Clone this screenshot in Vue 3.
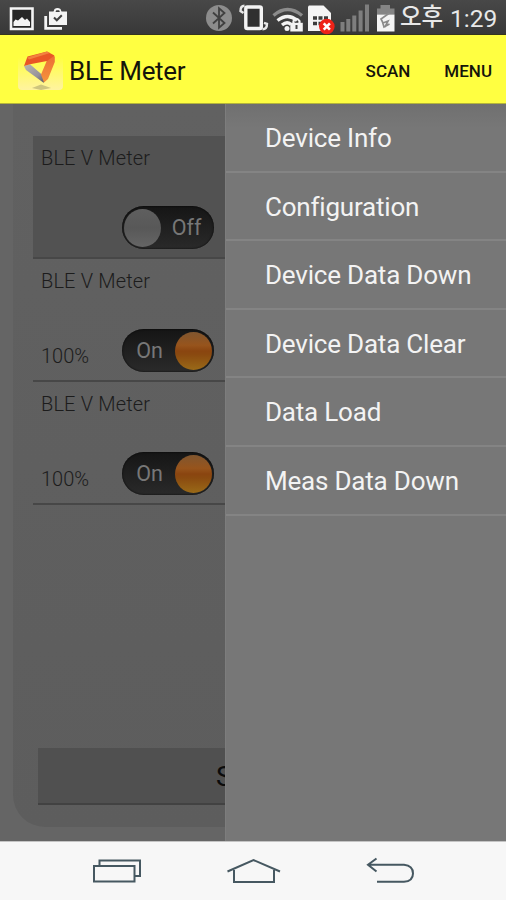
<script setup>
import { ref } from 'vue';

const devices = ref([
  { name: 'BLE V Meter', level: '', on: false },
  { name: 'BLE V Meter', level: '100%', on: true },
  { name: 'BLE V Meter', level: '100%', on: true }
]);

const menu = [
  'Device Info',
  'Configuration',
  'Device Data Down',
  'Device Data Clear',
  'Data Load',
  'Meas Data Down'
];

const toggle = (device) => device.on = !device.on;
</script>

<template>
  <div class="screen">
    <div class="status">
      <svg class="notices" width="80" height="35" viewBox="0 0 80 35">
        <path d="M11 8.5h21.500v20.500H11z" fill="#262626" stroke="#f4f4f4" stroke-width="2.600" />
        <path d="M13.500 26v-4l2-2.500 2.500 1 4-3.500 3 3 2-1.500 3 3.500v4z" fill="#f4f4f4" />
        <path d="M45.700 16v12.300H62" fill="none" stroke="#f4f4f4" stroke-width="2.800" />
        <path d="M49 11.500h4.500l1-2.500q3-2 6 0l1 2.500H67v13.500H49z" fill="#f4f4f4" />
        <path d="M55.500 12l.8-1.700h2.800l.8 1.700z" fill="#414141" />
        <path d="M54 17.500l2.800 2.800 5-5" fill="none" stroke="#414141" stroke-width="2" />
      </svg>
      <svg class="signals" width="196" height="35" viewBox="202 0 196 35">
        <!-- bluetooth -->
        <circle cx="219" cy="18" r="13" fill="#8c8c8c" />
        <path d="M213 12.500l11.500 10.500-5.500 4.800V8.200l5.500 4.800L213 23.500" fill="none" stroke="#404040" stroke-width="1.800" />
        <!-- vibration / rotation -->
        <rect x="245.800" y="7" width="15.500" height="21.500" rx="1.500" fill="#303030" stroke="#f4f4f4" stroke-width="3.400" />
        <path d="M244.500 5.800q-4 0-4 5.200l3 2M262.500 29.300q4.500 0 4.500-5.500l-3-1" fill="none" stroke="#e8e8e8" stroke-width="2.400" />
        <!-- wifi -->
        <g fill="none" stroke-width="3.400">
          <path d="M273.500 15.500q14-12 28.500 0" stroke="#8c8c8c" />
          <path d="M277.500 20.500q10.500-8 19.500 0" stroke="#f4f4f4" />
          <path d="M282 25q5-4 9 -.5" stroke="#f4f4f4" />
        </g>
        <circle cx="287" cy="28.500" r="2.500" fill="#f4f4f4" />
        <path d="M290.300 22.800h12.500v8.700h-12.500z" fill="#f4f4f4" />
        <path d="M293.500 24v-3q3-4.500 6 0v3" fill="none" stroke="#f4f4f4" stroke-width="2.200" />
        <path d="M296.500 25v4" stroke="#444" stroke-width="2" />
        <!-- sim card -->
        <path d="M309 5.500h14.500l7.500 7.500v18h-23v-24.500z" fill="#f4f4f4" />
        <path d="M313 18h15M313 23.500h15" stroke="#3c3c3c" stroke-width="3.600" stroke-dasharray="4 1.500" />
        <circle cx="326.800" cy="26.500" r="7.800" fill="#ee2218" />
        <path d="M323.700 23.400l6.200 6.200m0-6.200l-6.200 6.200" stroke="#fff" stroke-width="2.600" />
        <!-- signal bars -->
        <path d="M342.500 31.500v-9.500M348.300 31.500v-12.500M354.300 31.500V15.500M360.600 31.500V10.500M367 31.500V4.500" stroke="#7e7e7e" stroke-width="4" />
        <!-- battery -->
        <path d="M380.500 5h9.500v3.500h4.500v6H377v-6h3.500z" fill="#848484" />
        <path d="M377 14.500h17.500v17H377z" fill="#f4f4f4" />
        <path d="M389.500 13l-8.500 6 2 4 5-2-3 6M382.500 22l1.500 5 5.500-3" fill="none" stroke="#8a8a8a" stroke-width="1.700" />
      </svg>
      <span class="ampm">오후</span>
      <span class="clock">1:29</span>
    </div>

    <header>
      <svg class="logo" width="46" height="42" viewBox="18 51 46 42">
        <defs>
          <linearGradient id="tile" x1="0" y1="0" x2="0" y2="1">
            <stop offset="0.200" stop-color="#ffff41" />
            <stop offset="1" stop-color="#fff3a0" />
          </linearGradient>
          <linearGradient id="steel" x1="0" y1="0" x2="1" y2="1">
            <stop offset="0" stop-color="#b9b6b0" />
            <stop offset="0.600" stop-color="#97949a" />
            <stop offset="1" stop-color="#55535c" />
          </linearGradient>
          <linearGradient id="flame" x1="0" y1="0" x2="0" y2="1">
            <stop offset="0" stop-color="#ea6a35" />
            <stop offset="1" stop-color="#f6943c" />
          </linearGradient>
        </defs>
        <rect x="18" y="51" width="45" height="41" rx="4" fill="url(#tile)" />
        <path d="M32 90l9-3.500 10 3.500-10 2z" fill="#b9b072" opacity=".7" />
        <path d="M24 68l6-1.800 11.500 10L47 81l-3.500 3.700L26 72z" fill="url(#steel)" />
        <path d="M48 55l6.800 3.500v5.500L48 81l-4 3.500-3-8 5.500-13z" fill="url(#flame)" />
        <path d="M24 68l3.500-9.500L47 53.500l7.500 4-7.500 5.500-17 3.200z" fill="#e95626" />
        <path d="M27 59.500l20-6 3 1.500-21 6.500z" fill="#f2813f" />
      </svg>
      <h1>BLE Meter</h1>
      <a class="scan">SCAN</a>
      <a class="more">MENU</a>
    </header>

    <main>
      <section class="page">
        <div class="panel">
          <ul>
            <li v-for="(device, index) in devices" :key="'device' + index" :class="{ selected: index === 0 }">
              <p>{{ device.name }}</p>
              <div class="row">
                <span class="level">{{ device.level }}</span>
                <button class="switch" :class="{ on: device.on }" @click="toggle(device)">
                  <span class="label">{{ device.on ? 'On' : 'Off' }}</span>
                  <span class="knob"></span>
                </button>
              </div>
            </li>
          </ul>
          <div class="action">S</div>
        </div>
      </section>
      <nav class="drawer">
        <a v-for="item in menu" :key="item">{{ item }}</a>
      </nav>
    </main>

    <footer>
      <svg width="506" height="58" viewBox="0 842 506 58" fill="none" stroke="#465861" stroke-width="2">
        <path d="M94 866h40.500v15.500H94zM99.500 865.500v-5H140v15.500h-5" />
        <path d="M227.500 871.500L253.500 860l26.500 11.500M234 870v12h40v-12" />
        <path d="M376.500 858.500l-8.500 6.300 8.500 6.700M368.500 864.800H404q9 1 9 8.600t-9 8.400H377" />
      </svg>
    </footer>
  </div>
</template>

<style>
body {
  margin: 0;
}
</style>

<style scoped>
* {
  box-sizing: border-box;
}

.screen {
  width: 506px;
  height: 900px;
  display: flex;
  flex-direction: column;
  overflow: hidden;
  font-family: Roboto, "Noto Sans CJK KR", sans-serif;
}

.status {
  height: 35px;
  display: flex;
  align-items: center;
  background: linear-gradient(#484848, #383838);
  border-bottom: 1px solid #35351c;
  color: #e8e8e8;
  line-height: 35px;
  white-space: nowrap;
}

.signals {
  margin-left: 122px;
}

.ampm {
  width: 52px;
  padding-left: 2px;
  font-size: 23.500px;
  font-weight: 500;
}

.clock {
  padding-top: 3px;
  font-size: 24.500px;
}

header {
  height: 69px;
  display: flex;
  align-items: center;
  padding: 3px 14px 0 18px;
  background: #ffff41;
  border-bottom: 1px solid #b4b43b;
  color: #15150a;
}

h1 {
  margin: 0 0 0 5px;
  font-size: 26px;
  font-weight: 400;
  letter-spacing: -.3px;
}

header a {
  font-size: 17px;
  font-weight: 500;
}

.logo {
  margin-top: -1px;
}

.scan {
  margin-left: auto;
}

.more {
  margin-left: 34px;
}

main {
  height: 737px;
  display: flex;
}

.page {
  width: 225px;
  padding: 0 0 14px 13px;
  overflow: hidden;
  background: #656565;
}

.panel {
  width: 480px;
  height: 723px;
  padding: 32px 0 0 20px;
  display: flex;
  flex-direction: column;
  background: linear-gradient(#616161, #5d5d5d);
  border-radius: 0 0 32px 32px;
}

ul {
  margin: 0;
  padding: 0;
  list-style: none;
}

li {
  height: 123px;
  padding: 10px 8px 0;
  border-bottom: 2px solid #474747;
  color: #1c1c1c;
  font-size: 20px;
  font-weight: 300;
}

li.selected {
  background: #525252;
}

li p {
  margin: 0;
  line-height: 24px;
  letter-spacing: .15px;
}

.row {
  display: flex;
  margin-top: 36px;
}

.level {
  width: 81px;
  padding-top: 15px;
  line-height: 24px;
}

.switch {
  width: 92px;
  height: 43px;
  padding: 2px;
  display: flex;
  flex-direction: row-reverse;
  align-items: center;
  border: 0;
  border-radius: 22px;
  background: linear-gradient(#151515, #2a2a2a);
  box-shadow: inset 0 0 2px #000;
  color: #777;
  font: 21.500px Roboto, sans-serif;
}

.switch.on {
  flex-direction: row;
}

.switch .label {
  flex: 1;
  text-align: center;
}

.knob {
  width: 37px;
  height: 38px;
  flex: none;
  border-radius: 50%;
  background: linear-gradient(#5f5f5f, #585858 50%, #656565);
}

.on .knob {
  background: linear-gradient(#80562f, #97541c 35%, #8a4510 50%, #8a4a10 60%, #9a6a18);
}

.action {
  width: 386px;
  height: 57px;
  margin: auto 0 22px 5px;
  padding-left: 178px;
  background: #505050;
  border-bottom: 2px solid #424242;
  color: #0b0b0b;
  font-size: 28px;
  line-height: 58px;
}

.drawer {
  flex: 1;
  background: linear-gradient(#707070, #777 24px);
  border-left: 1px solid #7d7d7d;
}

.drawer a {
  height: 68.600px;
  display: block;
  padding-left: 39px;
  border-bottom: 2px solid #848484;
  color: #f3f3f3;
  font-size: 26px;
  line-height: 68px;
  letter-spacing: -.2px;
}

footer {
  height: 59px;
  background: #f7f7f7;
  border-top: 1px solid #c4c4c4;
}

footer svg {
  display: block;
}
</style>
